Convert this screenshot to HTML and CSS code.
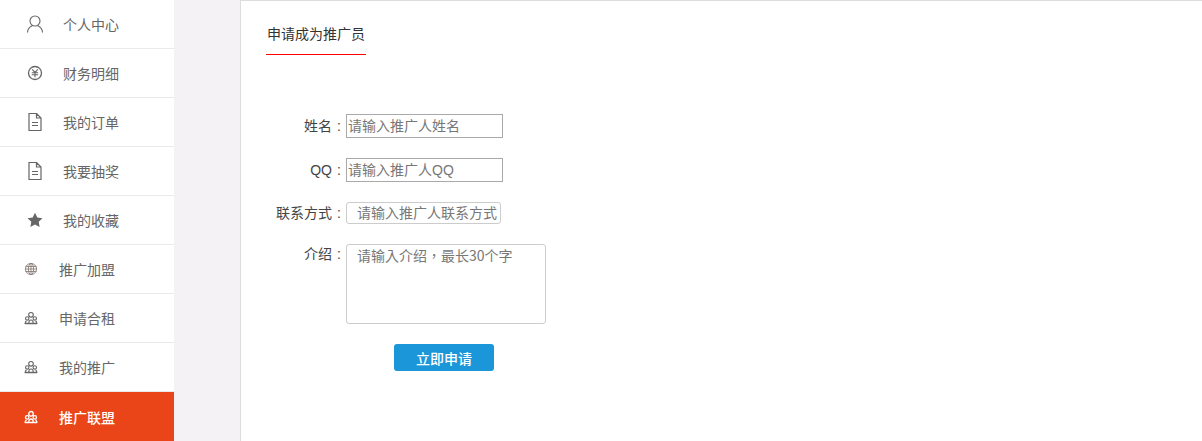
FILE: index.html
```html
<!DOCTYPE html>
<html lang="zh-CN">
<head>
    <meta charset="UTF-8">
    <meta name="viewport" content="width=device-width, initial-scale=1.0">
    <title>申请成为推广员</title>
    <link rel="stylesheet" href="styles.css">
</head>
<body>
    <div class="page">
        <ul class="side-menu">
            <li class="menu-item">
                <svg class="icon" width="18" height="18" viewBox="0 0 18 18" fill="none" stroke="currentColor" stroke-width="1.1"><circle cx="9" cy="6" r="5"/><path d="M1.500 17.500c0-3.500 2-5.500 5-7M16.500 17.500c0-3.500-2-5.500-5-7"/></svg>
                <span>个人中心</span>
            </li>
            <li class="menu-item">
                <svg class="icon" width="18" height="18" viewBox="0 0 18 18" fill="none" stroke="currentColor"><circle cx="9" cy="9" r="6.500" stroke-width="1.300"/><path d="M6.200 5.300 9 8.400l2.800-3.100M5.800 8.800h6.400M5.800 10.800h6.400M9 8.400v4.800" stroke-width="1.100"/></svg>
                <span>财务明细</span>
            </li>
            <li class="menu-item">
                <svg class="icon" width="18" height="18" viewBox="0 0 18 18" fill="none" stroke="currentColor" stroke-width="1.200"><path d="M3 .5h7.500L15 5v12.500H3zM10.500 .5V5H15M6 9.500h6M6 12.500h6"/></svg>
                <span>我的订单</span>
            </li>
            <li class="menu-item">
                <svg class="icon" width="18" height="18" viewBox="0 0 18 18" fill="none" stroke="currentColor" stroke-width="1.200"><path d="M3 .5h7.500L15 5v12.500H3zM10.500 .5V5H15M6 9.500h6M6 12.500h6"/></svg>
                <span>我要抽奖</span>
            </li>
            <li class="menu-item">
                <svg class="icon" width="18" height="18" viewBox="0 0 18 18" fill="currentColor"><path d="m9 1.800 2.300 4.700 5.200.7-3.800 3.600.9 5.200L9 13.500l-4.600 2.500.9-5.200-3.800-3.600 5.200-.7z"/></svg>
                <span>我的收藏</span>
            </li>
            <li class="menu-item menu-sub">
                <svg class="icon globe" width="14" height="14" viewBox="0 0 14 14" fill="none" stroke="currentColor" stroke-width=".9"><circle cx="7" cy="7" r="5.600"/><ellipse cx="7" cy="7" rx="2.600" ry="5.600"/><path d="M1.500 4.500h11M1.200 7h11.600M1.500 9.500h11M7 1v12"/></svg>
                <span>推广加盟</span>
            </li>
            <li class="menu-item menu-sub">
                <svg class="icon" width="14" height="14" viewBox="0 0 14 14" fill="none" stroke="currentColor" stroke-width="1.100"><circle cx="7" cy="3.800" r="2.300"/><circle cx="3.200" cy="7.400" r="1.700"/><circle cx="10.800" cy="7.400" r="1.700"/><path d="M1.200 12.300c0-1.100.5-2 1.300-2.400M12.800 12.300c0-1.100-.5-2-1.300-2.400M4.800 12c0-1.700.9-3 2.200-3s2.200 1.300 2.200 3"/><path d="M1.200 12.500h11.600" stroke-width="1.400" stroke-linecap="round"/></svg>
                <span>申请合租</span>
            </li>
            <li class="menu-item menu-sub">
                <svg class="icon" width="14" height="14" viewBox="0 0 14 14" fill="none" stroke="currentColor" stroke-width="1.100"><circle cx="7" cy="3.800" r="2.300"/><circle cx="3.200" cy="7.400" r="1.700"/><circle cx="10.800" cy="7.400" r="1.700"/><path d="M1.200 12.300c0-1.100.5-2 1.300-2.400M12.800 12.300c0-1.100-.5-2-1.300-2.400M4.800 12c0-1.700.9-3 2.200-3s2.200 1.300 2.200 3"/><path d="M1.200 12.500h11.600" stroke-width="1.400" stroke-linecap="round"/></svg>
                <span>我的推广</span>
            </li>
            <li class="menu-item menu-sub active">
                <svg class="icon" width="14" height="14" viewBox="0 0 14 14" fill="none" stroke="currentColor" stroke-width="1.300"><circle cx="7" cy="3.800" r="2.300"/><circle cx="3.200" cy="7.400" r="1.700"/><circle cx="10.800" cy="7.400" r="1.700"/><path d="M1.200 12.300c0-1.100.5-2 1.300-2.400M12.800 12.300c0-1.100-.5-2-1.300-2.400M4.800 12c0-1.700.9-3 2.200-3s2.200 1.300 2.200 3"/><path d="M1.200 12.500h11.600" stroke-width="1.400" stroke-linecap="round"/></svg>
                <span>推广联盟</span>
            </li>
        </ul>
        <div class="panel">
            <div class="tabs"><span class="tab">申请成为推广员</span></div>
            <form class="apply-form">
                <label class="row-label">姓名<span class="colon">:</span></label>
                <input class="plain-input" type="text" placeholder="请输入推广人姓名">
                <label class="row-label">QQ<span class="colon">:</span></label>
                <input class="plain-input" type="text" placeholder="请输入推广人QQ">
                <label class="row-label row-short">联系方式<span class="colon">:</span></label>
                <input class="round-input" type="text" placeholder="请输入推广人联系方式">
                <label class="row-label row-intro">介绍<span class="colon">:</span></label>
                <textarea class="intro" lang="zh-TW" placeholder="请输入介绍，最长30个字"></textarea>
                <button class="submit-btn" type="button">立即申请</button>
            </form>
        </div>
    </div>
</body>
</html>
```

FILE: styles.css
```css
* {
    box-sizing: border-box;
}
html, body {
    height: 100%;
    margin: 0;
    overflow: hidden;
}
body {
    font-family: "Liberation Sans", "Noto Sans CJK SC", sans-serif;
    font-size: 14px;
    color: #444;
    background-color: #f5f2f6;
}
.page {
    display: flex;
    height: 441px;
}
.side-menu {
    width: 174px;
    flex-shrink: 0;
    margin: 0;
    padding: 0;
    list-style: none;
    background: #fff;
}
.menu-item {
    display: flex;
    align-items: center;
    height: 49px;
    padding-left: 26px;
    border-bottom: 1px solid #ece9ec;
    color: #666;
}
.menu-item .icon {
    width: 18px;
    margin-right: 19px;
}
.menu-sub {
    padding-left: 24px;
}
.menu-sub .icon {
    width: 14px;
    margin-right: 21px;
}
.globe {
    color: #8a7f78;
}
.menu-item.active {
    background-color: #ea4518;
    border-bottom: none;
    color: #fff;
    font-weight: 500;
}
.panel {
    flex: 1;
    margin-left: 66px;
    padding-left: 25px;
    background: #fff;
    border-top: 1px solid #ddd;
    border-left: 1px solid #ddd;
}
.tabs {
    height: 54px;
}
.tab {
    display: block;
    width: 100px;
    height: 54px;
    padding: 25px 0 0 1px;
    line-height: 16px;
    border-bottom: 1px solid #f00;
    color: #333;
}
.apply-form {
    display: grid;
    grid-template-columns: 80px 200px;
    align-items: start;
    margin-top: 59px;
    row-gap: 20px;
}
.row-label {
    line-height: 24px;
    text-align: right;
    white-space: nowrap;
}
.row-short {
    line-height: 22px;
}
.row-intro {
    line-height: 20px;
}
.colon {
    display: inline-block;
    width: 14px;
    text-align: center;
}
.plain-input {
    width: 157px;
    height: 24px;
    padding: 0 1px;
    font: inherit;
    border: 1px solid #a9a9a9;
}
.round-input {
    width: 155px;
    height: 22px;
    padding: 0 0 0 10px;
    font: inherit;
    border: 1px solid #ccc;
    border-radius: 3px;
}
.intro {
    width: 200px;
    height: 80px;
    padding: 0 10px;
    font: inherit;
    font-family: "Noto Sans CJK TC", "Liberation Sans", sans-serif;
    border: 1px solid #ccc;
    border-radius: 3px;
    resize: none;
}
.submit-btn {
    grid-column: 2;
    justify-self: start;
    width: 100px;
    height: 27px;
    margin-left: 48px;
    padding: 0;
    font: inherit;
    font-weight: 500;
    color: #fff;
    background-color: #1a96d9;
    border: none;
    border-radius: 3px;
}
input::placeholder, textarea::placeholder {
    color: #777;
    opacity: 1;
}
```
